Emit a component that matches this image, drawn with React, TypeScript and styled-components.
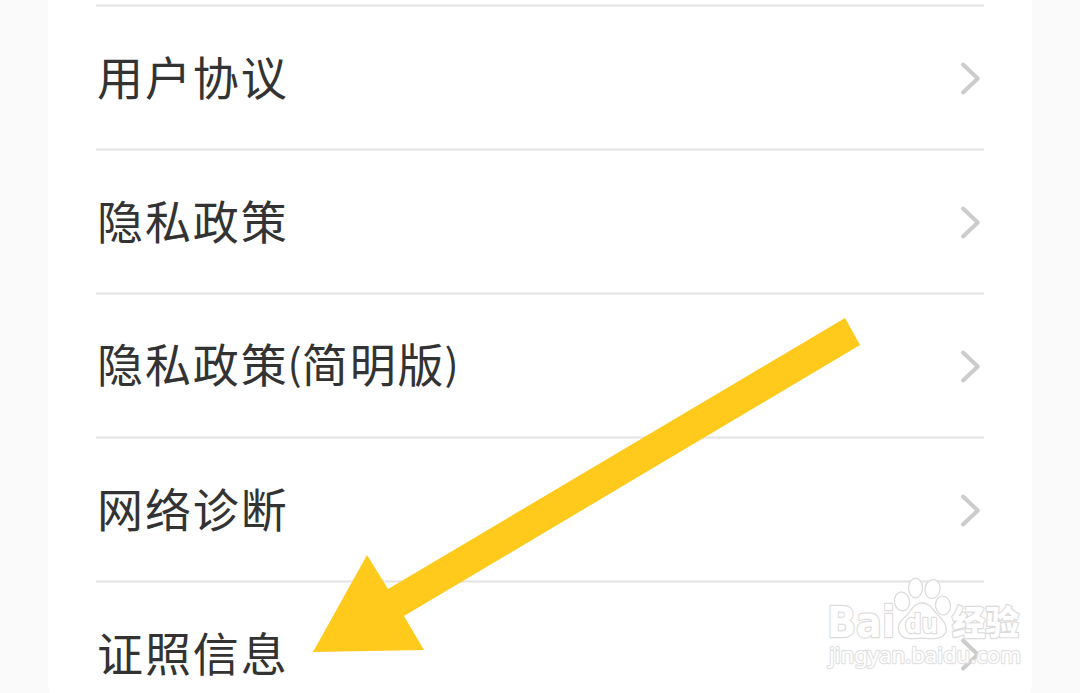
import styled, { createGlobalStyle } from "styled-components";

const GlobalStyle = createGlobalStyle`
  * {
    box-sizing: border-box;
  }

  body {
    margin: 0;
    background: #fafafa;
    overflow: hidden;
    font-family: "Noto Sans CJK SC", sans-serif;
  }
`;

const Page = styled.main`
  position: relative;
  height: 693px;
  overflow: hidden;
`;

const Card = styled.ul`
  height: 718px;
  margin: 0 48px;
  padding: 4px 48px 0;
  list-style: none;
  background: #fff;
  border-radius: 0 0 36px 36px;
`;

const Row = styled.li`
  display: flex;
  align-items: center;
  justify-content: space-between;
  height: 144px;
  padding: 4px 1px 0;
  background: linear-gradient(#f0f0f0 1px, #e4e4e4 1px, #e4e4e4 2px, #f0f0f0 2px, #f0f0f0 3px, #fff 3px);
`;

const Label = styled.span`
  padding-bottom: 6px;
  font-size: 46px;
  line-height: 66px;
  letter-spacing: 1.9px;
  color: #333;
  white-space: nowrap;
`;

/* brackets are a little smaller and sit closer to the characters */
const Bracket = styled.span`
  position: relative;
  top: -2px;
  margin-left: -1px;
  font-size: 42px;
  letter-spacing: 0;
`;

const Chevron = styled.svg`
  width: 24px;
  height: 36px;
  fill: none;
  stroke: #ccc;
  stroke-width: 4;
  stroke-linecap: round;
  stroke-linejoin: round;
`;

const Arrow = styled.svg`
  position: absolute;
  top: 0;
  left: 0;
  width: 1080px;
  height: 693px;
  fill: #ffca1b;
`;

const Watermark = styled.svg`
  position: absolute;
  left: 820px;
  top: 570px;
  width: 210px;
  height: 106px;
  fill: #fff;
  stroke: #dcdcdc;
  stroke-width: 1.3;
  stroke-linejoin: round;

  text {
    stroke-width: 2.4;
    paint-order: stroke;
  }
`;

const items = ["用户协议", "隐私政策", "隐私政策(简明版)", "网络诊断", "证照信息"];

function App() {
  return (
    <Page>
      <GlobalStyle />
      <Card>
        {items.map((item) => (
          <Row key={item}>
            <Label>
              {item.split(/([()])/).map((part, i) =>
                part === "(" || part === ")" ? <Bracket key={i}>{part}</Bracket> : part
              )}
            </Label>
            <Chevron viewBox="0 0 24 36">
              <path d="M4 4.5L18.8 18.5L4 32.5" />
            </Chevron>
          </Row>
        ))}
      </Card>
      <Arrow viewBox="0 0 1080 693">
        <path d="M845 318L860 345L404 616L424 650L313 652L367 555L388 589Z" />
      </Arrow>
      <Watermark viewBox="820 570 210 106">
        <text x="827" y="637" fontFamily="DejaVu Sans" fontWeight="700" fontSize="42" textLength="68" lengthAdjust="spacingAndGlyphs">Bai</text>
        <ellipse cx="902" cy="601.5" rx="7.5" ry="9.5" transform="rotate(-10 902 601.5)" />
        <ellipse cx="915.5" cy="588" rx="7" ry="9.8" />
        <ellipse cx="932.5" cy="589" rx="7.5" ry="9.5" transform="rotate(12 932.5 589)" />
        <ellipse cx="943" cy="605.5" rx="7.5" ry="9.5" transform="rotate(-8 943 605.5)" />
        <path d="M922 603C913 603 911 612 905 617C899 622 897 627 899 632C902 640 911 639 922 638C933 639 942 640 946 632C948 626 944 621 939 616C933 611 931 603 922 603Z" />
        <text x="905" y="633" fontFamily="DejaVu Sans" fontWeight="700" fontSize="26" textLength="33" lengthAdjust="spacingAndGlyphs">du</text>
        <text x="952" y="635" fontFamily="Noto Sans CJK SC" fontWeight="900" fontSize="34" textLength="67" lengthAdjust="spacingAndGlyphs">经验</text>
        <text x="829" y="663" fontFamily="Noto Sans" fontSize="22" opacity="0.8" textLength="192" lengthAdjust="spacingAndGlyphs">jingyan.baidu.com</text>
      </Watermark>
    </Page>
  );
}

export default App;
